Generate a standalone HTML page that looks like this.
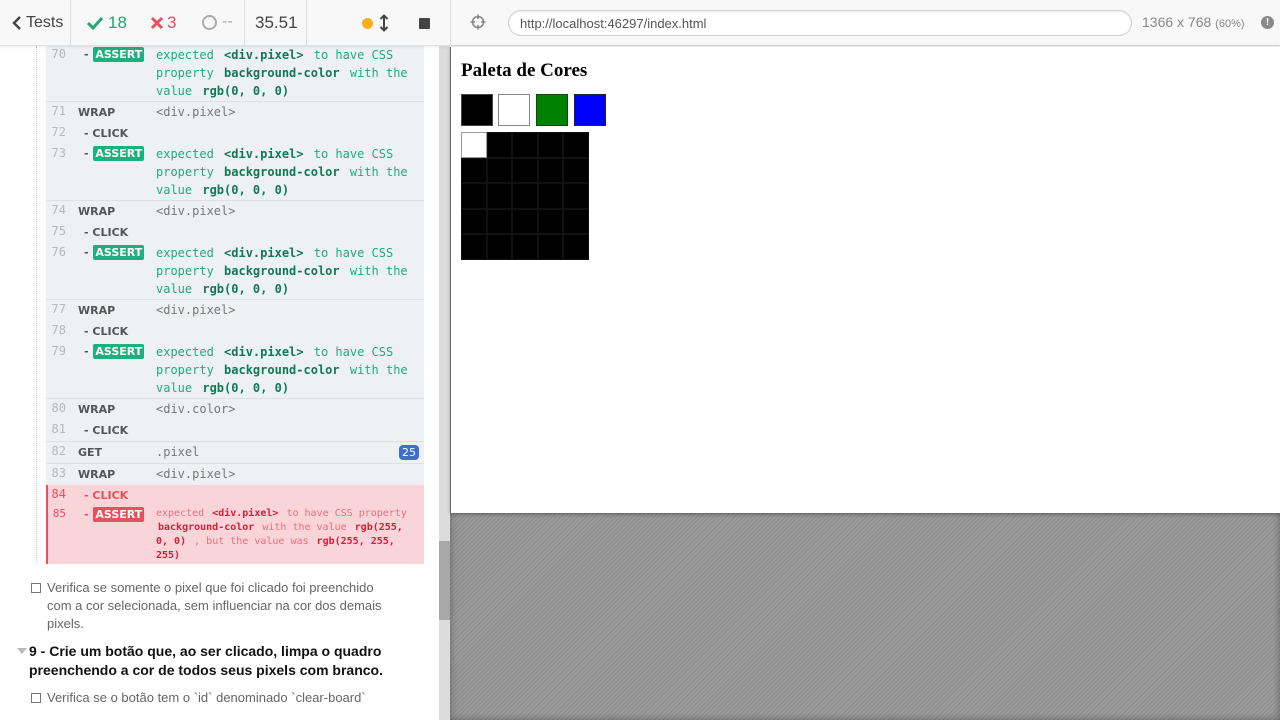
<!DOCTYPE html>
<html><head><meta charset="utf-8"><style>
*{margin:0;padding:0;box-sizing:border-box}
body{width:1280px;height:720px;overflow:hidden;position:relative;background:#fff;font-family:"Liberation Sans",sans-serif}
.a{position:absolute}
.num{position:absolute;width:20px;text-align:right;left:46px;color:#b4b8c0;font-family:"DejaVu Sans Mono",monospace;font-size:12px}
.cmd{position:absolute;left:78px;color:#555;font-weight:bold;font-size:11px;font-family:"DejaVu Sans",sans-serif}
.sub{left:84px}
.msg{position:absolute;left:156px;width:262px;line-height:18px;font-family:"DejaVu Sans Mono",monospace;font-size:12px;color:#1fad78}
.msg b{color:#0f7a52;margin:0 3px}
.red b{color:#d61f37;margin:0 2px}
.badge{display:inline-block;background:#1db07c;color:#fff;padding:0 2px;border-radius:2px;line-height:15px;font-size:11px;margin-left:1px}
.sep{position:absolute;left:46px;width:378px;height:1px;background:#dde1e6}
.px{position:absolute;width:25.6px;height:25.6px;background:#000;border:1px solid #111}
.t{font-family:"Liberation Sans",sans-serif}
</style></head><body>
<div class="a" style="left:0;top:0;width:439px;height:720px;background:#fff"></div>
<div class="a" style="left:36px;top:46px;height:518px;border-left:1px dotted #ccc"></div>
<div class="a" style="left:46px;top:46px;width:378px;height:439px;background:#eef1f4"></div>
<div class="a" style="left:46px;top:485px;width:378px;height:79px;background:#f9d5d9;border-left:2px solid #e94f5f"></div>
<div class="sep" style="top:101px"></div>
<div class="sep" style="top:200px"></div>
<div class="sep" style="top:299px"></div>
<div class="sep" style="top:398px"></div>
<div class="sep" style="top:441px"></div>
<div class="sep" style="top:463px"></div>

<div class="num" style="top:47px">70</div><div class="cmd sub" style="top:47px">- <span class="badge">ASSERT</span></div>
<div class="msg" style="top:46px">expected <b>&lt;div.pixel&gt;</b> to have CSS property <b>background-color</b> with the value <b>rgb(0, 0, 0)</b></div>

<div class="num" style="top:104px">71</div><div class="cmd" style="top:106px">WRAP</div><div class="msg" style="top:103px;color:#777">&lt;div.pixel&gt;</div>
<div class="num" style="top:125px">72</div><div class="cmd sub" style="top:127px">- CLICK</div>
<div class="num" style="top:146px">73</div><div class="cmd sub" style="top:146px">- <span class="badge">ASSERT</span></div>
<div class="msg" style="top:145px">expected <b>&lt;div.pixel&gt;</b> to have CSS property <b>background-color</b> with the value <b>rgb(0, 0, 0)</b></div>

<div class="num" style="top:203px">74</div><div class="cmd" style="top:205px">WRAP</div><div class="msg" style="top:202px;color:#777">&lt;div.pixel&gt;</div>
<div class="num" style="top:224px">75</div><div class="cmd sub" style="top:226px">- CLICK</div>
<div class="num" style="top:245px">76</div><div class="cmd sub" style="top:245px">- <span class="badge">ASSERT</span></div>
<div class="msg" style="top:244px">expected <b>&lt;div.pixel&gt;</b> to have CSS property <b>background-color</b> with the value <b>rgb(0, 0, 0)</b></div>

<div class="num" style="top:302px">77</div><div class="cmd" style="top:304px">WRAP</div><div class="msg" style="top:301px;color:#777">&lt;div.pixel&gt;</div>
<div class="num" style="top:323px">78</div><div class="cmd sub" style="top:325px">- CLICK</div>
<div class="num" style="top:344px">79</div><div class="cmd sub" style="top:344px">- <span class="badge">ASSERT</span></div>
<div class="msg" style="top:343px">expected <b>&lt;div.pixel&gt;</b> to have CSS property <b>background-color</b> with the value <b>rgb(0, 0, 0)</b></div>

<div class="num" style="top:401px">80</div><div class="cmd" style="top:403px">WRAP</div><div class="msg" style="top:400px;color:#777">&lt;div.color&gt;</div>
<div class="num" style="top:422px">81</div><div class="cmd sub" style="top:424px">- CLICK</div>
<div class="num" style="top:444px">82</div><div class="cmd" style="top:446px">GET</div><div class="msg" style="top:443px;color:#777">.pixel</div>
<div class="a" style="left:399px;top:445px;width:20px;height:15px;background:#3f6fc9;color:#fff;border-radius:4px;font-size:11px;text-align:center;line-height:15px;font-family:'DejaVu Sans',sans-serif">25</div>
<div class="num" style="top:466px">83</div><div class="cmd" style="top:468px">WRAP</div><div class="msg" style="top:465px;color:#777">&lt;div.pixel&gt;</div>

<div class="num" style="top:487px;color:#e94f5f">84</div><div class="cmd sub" style="top:489px;color:#e94f5f">- CLICK</div>
<div class="num" style="top:507px;color:#e94f5f;font-size:11px">85</div><div class="cmd sub" style="top:507px;color:#e94f5f">- <span class="badge" style="background:#e94f5f">ASSERT</span></div>
<div class="msg red" style="top:507px;font-size:10px;line-height:14px;color:#e8707c;width:258px">expected <b>&lt;div.pixel&gt;</b> to have CSS property <b>background-color</b> with the value <b>rgb(255, 0, 0)</b> , but the value was <b>rgb(255, 255, 255)</b></div>

<div class="a" style="left:31px;top:579px;width:400px;color:#666;line-height:18px"><span style="position:absolute;left:0;top:4px;width:10px;height:10px;border:1px solid #777"></span><div class="t" style="padding-left:16px;width:360px;font-size:13px">Verifica se somente o pixel que foi clicado foi preenchido com a cor selecionada, sem influenciar na cor dos demais pixels.</div></div>
<div class="a" style="left:17px;top:648px;width:0;height:0;border-left:5px solid transparent;border-right:5px solid transparent;border-top:6px solid #bbb"></div>
<div class="a t" style="left:29px;top:642px;width:400px;font-size:14px;color:#111;font-weight:bold;line-height:19px">9 - Crie um botão que, ao ser clicado, limpa o quadro preenchendo a cor de todos seus pixels com branco.</div>
<div class="a" style="left:31px;top:689px;width:400px;color:#666;line-height:18px"><span style="position:absolute;left:0;top:4px;width:10px;height:10px;border:1px solid #777"></span><div class="t" style="padding-left:16px;font-size:13px">Verifica se o botão tem o `id` denominado `clear-board`</div></div>

<div class="a" style="left:439px;top:0;width:11px;height:720px;background:#dcdcdc"></div>
<div class="a" style="left:439px;top:541px;width:11px;height:79px;background:#a8a8a8"></div>

<div class="a" style="left:0;top:0;width:450px;height:46px;background:#f8f8f8;border-bottom:1px solid #e2e2e2;box-shadow:0 1px 3px rgba(0,0,0,.08)"></div>
<svg class="a" style="left:12px;top:16px" width="10" height="14"><path d="M8 1 L2 7 L8 13" stroke="#444" stroke-width="2.4" fill="none"/></svg>
<div class="a t" style="left:26px;top:14px;font-size:16px;color:#444">Tests</div>
<div class="a" style="left:70px;top:0;width:1px;height:46px;background:#ddd"></div>
<svg class="a" style="left:86px;top:15px" width="18" height="16"><path d="M2 8 L7 13 L16 3" stroke="#1fa971" stroke-width="3" fill="none"/></svg>
<div class="a t" style="left:108px;top:13px;font-size:17px;color:#1fa971">18</div>
<svg class="a" style="left:150px;top:16px" width="14" height="14"><path d="M2 2 L12 12 M12 2 L2 12" stroke="#e94f5f" stroke-width="3"/></svg>
<div class="a t" style="left:167px;top:13px;font-size:17px;color:#e94f5f">3</div>
<div class="a" style="left:202px;top:15px;width:15px;height:15px;border:2px solid #aaa;border-radius:50%"></div>
<div class="a t" style="left:222px;top:13px;font-size:16px;color:#aaa">--</div>
<div class="a" style="left:244px;top:0;width:1px;height:46px;background:#ddd"></div>
<div class="a t" style="left:255px;top:13px;font-size:17px;color:#444">35.51</div>
<div class="a" style="left:306px;top:0;width:1px;height:46px;background:#ddd"></div>
<div class="a" style="left:362px;top:18px;width:11px;height:11px;border-radius:50%;background:#f7b01b"></div>
<svg class="a" style="left:379px;top:14px" width="10" height="18"><path d="M5 2 V16 M1.5 5 L5 1.5 L8.5 5 M1.5 13 L5 16.5 L8.5 13" stroke="#444" stroke-width="2" fill="none"/></svg>
<div class="a" style="left:419px;top:18px;width:11px;height:11px;background:#444;border-radius:1px"></div>

<div class="a" style="left:450px;top:0;width:830px;height:46px;background:#f8f8f8;border-bottom:1px solid #ddd;border-left:1px solid #ddd"></div>
<svg class="a" style="left:470px;top:14px" width="16" height="16"><circle cx="8" cy="8" r="5.5" stroke="#888" stroke-width="1.6" fill="none"/><path d="M8 0.5 V5 M8 11 V15.5 M0.5 8 H5 M11 8 H15.5" stroke="#888" stroke-width="1.6"/></svg>
<div class="a t" style="left:508px;top:10px;width:624px;height:26px;border:1px solid #d0d0d0;border-radius:13px;background:#fff;box-shadow:inset 0 1px 2px rgba(0,0,0,.08);font-size:13px;color:#555;padding:5px 0 0 11px">http://localhost:46297/index.html</div>
<div class="a t" style="left:1142px;top:14px;font-size:14px;color:#888">1366 x 768 <span style="font-size:11px">(60%)</span></div>
<div class="a" style="left:1261px;top:16px;width:13px;height:13px;border-radius:50%;background:#888;color:#fff;font-size:10px;font-weight:bold;text-align:center;line-height:13px">!</div>

<div class="a" style="left:450px;top:47px;width:830px;height:673px;background:repeating-linear-gradient(135deg,#9a9a9a 0 2px,#8c8c8c 2px 3px)"></div>
<div class="a" style="left:450px;top:47px;width:830px;height:673px;box-shadow:inset 0 0 8px rgba(0,0,0,.35)"></div>
<div class="a" style="left:451px;top:47px;width:829px;height:466px;background:#fff;box-shadow:0 1px 4px rgba(0,0,0,.4)"></div>
<div class="a" style="left:461px;top:60px;font-family:'Liberation Serif',serif;font-weight:bold;font-size:19px;color:#000">Paleta de Cores</div>
<div class="a" style="left:461px;top:94px;width:32px;height:32px;background:#000;border:1px solid #444"></div>
<div class="a" style="left:498px;top:94px;width:32px;height:32px;background:#fff;border:1px solid #888"></div>
<div class="a" style="left:536px;top:94px;width:32px;height:32px;background:#008000;border:1px solid #0a4a0a"></div>
<div class="a" style="left:574px;top:94px;width:32px;height:32px;background:#00f;border:1px solid #223"></div>
<div class="a" style="left:461px;top:132px;width:128px;height:128px;background:#000">
<div class="px" style="left:0;top:0;background:#fff;border-color:#999"></div><div class="px" style="left:25.6px;top:0"></div><div class="px" style="left:51.2px;top:0"></div><div class="px" style="left:76.8px;top:0"></div><div class="px" style="left:102.4px;top:0"></div>
<div class="px" style="left:0;top:25.6px"></div><div class="px" style="left:25.6px;top:25.6px"></div><div class="px" style="left:51.2px;top:25.6px"></div><div class="px" style="left:76.8px;top:25.6px"></div><div class="px" style="left:102.4px;top:25.6px"></div>
<div class="px" style="left:0;top:51.2px"></div><div class="px" style="left:25.6px;top:51.2px"></div><div class="px" style="left:51.2px;top:51.2px"></div><div class="px" style="left:76.8px;top:51.2px"></div><div class="px" style="left:102.4px;top:51.2px"></div>
<div class="px" style="left:0;top:76.8px"></div><div class="px" style="left:25.6px;top:76.8px"></div><div class="px" style="left:51.2px;top:76.8px"></div><div class="px" style="left:76.8px;top:76.8px"></div><div class="px" style="left:102.4px;top:76.8px"></div>
<div class="px" style="left:0;top:102.4px"></div><div class="px" style="left:25.6px;top:102.4px"></div><div class="px" style="left:51.2px;top:102.4px"></div><div class="px" style="left:76.8px;top:102.4px"></div><div class="px" style="left:102.4px;top:102.4px"></div>
</div>
</body></html>
